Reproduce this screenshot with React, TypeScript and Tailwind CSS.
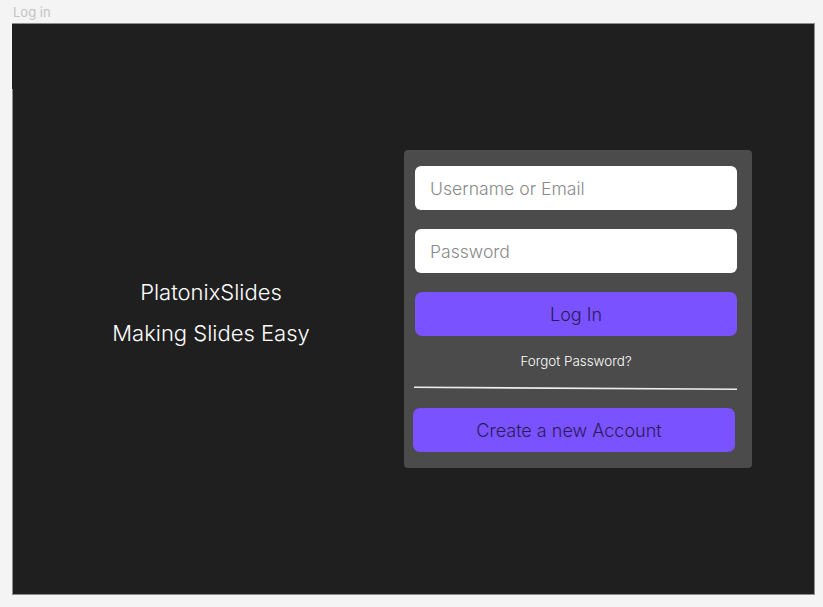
import React from "react";

export default function App() {
  const font = { fontFamily: "Inter, 'Noto Sans', sans-serif" };
  return (
    <div className="w-[823px] h-[607px] bg-[#f4f4f4] overflow-hidden" style={font}>
      <div className="h-[23px] pl-[13px] pt-[4px] text-[13px] leading-[16px] text-[#c4c4c4]">Log in</div>
      <div className="relative ml-[12px] w-[803px] h-[572px] bg-[#1f1f1f] border-t border-r border-b border-[#8e8e8e]">
        <div className="absolute left-0 top-[65px] bottom-0 w-px bg-[#8e8e8e]" />
        <div className="flex pt-[126px]">
          <div className="w-[392px] pl-[6px] pt-[122px] flex flex-col items-center text-white font-light text-[22px] leading-[41px]">
            <div>PlatonixSlides</div>
            <div>Making Slides Easy</div>
          </div>
          <div className="w-[348px] h-[318px] bg-[#4b4b4b] rounded-[4px] pl-[10px] pt-[16px] flex flex-col">
            <div className="w-[322px] h-[44px] ml-px bg-white rounded-[6px] flex items-center pl-[15px] pt-[3px] text-[17.6px] text-[#8a8a8a] font-light">
              Username or Email
            </div>
            <div className="w-[322px] h-[44px] ml-px mt-[19px] bg-white rounded-[6px] flex items-center pl-[15px] pt-[3px] text-[17.6px] text-[#8a8a8a] font-light">
              Password
            </div>
            <div className="w-[322px] h-[44px] ml-px mt-[19px] bg-[#7b52ff] rounded-[7px] flex items-center justify-center text-[18px] text-[#2a1b5c] font-light">
              Log In
            </div>
            <div className="w-[322px] ml-px mt-[15px] text-center text-[13.4px] leading-[20px] text-white font-light">
              Forgot Password?
            </div>
            <svg className="mt-[15px]" width="324" height="5" viewBox="0 0 324 5">
              <line x1="0" y1="1.3" x2="323" y2="3.3" stroke="#ededed" strokeWidth="1.6" />
            </svg>
            <div className="w-[322px] h-[44px] mt-[17px] -ml-px pr-[10px] bg-[#7b52ff] rounded-[7px] flex items-center justify-center text-[18px] text-[#2a1b5c] font-light">
              Create a new Account
            </div>
          </div>
        </div>
      </div>
    </div>
  );
}
